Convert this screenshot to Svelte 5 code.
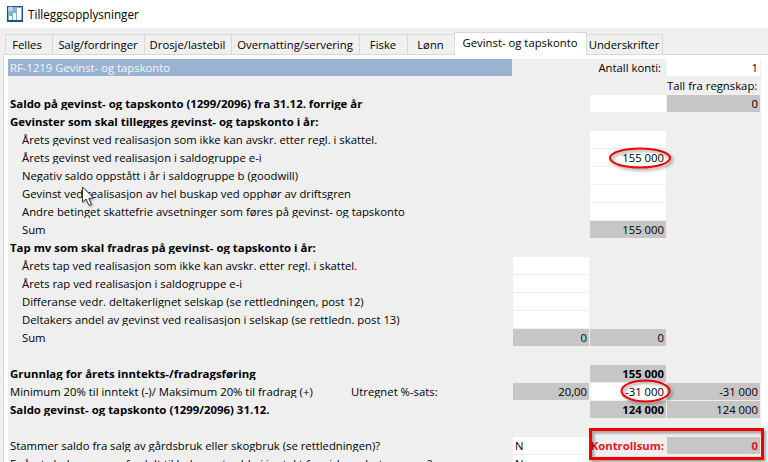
<script>
const tabs = [
  { name: 'Felles', w: 47 },
  { name: 'Salg/fordringer', w: 92 },
  { name: 'Drosje/lastebil', w: 87 },
  { name: 'Overnatting/servering', w: 128 },
  { name: 'Fiske', w: 48 },
  { name: 'Lønn', w: 47 },
  { name: 'Gevinst- og tapskonto', w: 133, active: true },
  { name: 'Underskrifter', w: 76, last: true }
];

// a, b, c = the three number columns: [kind, text]
const rows = [
  { title: 'RF-1219 Gevinst- og tapskonto', b: ['note', 'Antall konti:'], c: ['w', '1'] },
  { c: ['plain', 'Tall fra regnskap:'] },
  { label: 'Saldo på gevinst- og tapskonto (1299/2096) fra 31.12. forrige år', bold: true, b: ['w', ''], c: ['g', '0'] },
  { label: 'Gevinster som skal tillegges gevinst- og tapskonto i år:', bold: true },
  { label: 'Årets gevinst ved realisasjon som ikke kan avskr. etter regl. i skattel.', sub: true, b: ['w', ''] },
  { label: 'Årets gevinst ved realisasjon i saldogruppe e-i', sub: true, b: ['w', '155 000'] },
  { label: 'Negativ saldo oppstått i år i saldogruppe b (goodwill)', sub: true, b: ['w', ''] },
  { label: 'Gevinst ved realisasjon av hel buskap ved opphør av driftsgren', sub: true, b: ['w', ''] },
  { label: 'Andre betinget skattefrie avsetninger som føres på gevinst- og tapskonto', sub: true, b: ['w', ''] },
  { label: 'Sum', sub: true, b: ['g', '155 000'] },
  { label: 'Tap mv som skal fradras på gevinst- og tapskonto i år:', bold: true },
  { label: 'Årets tap ved realisasjon som ikke kan avskr. etter regl. i skattel.', sub: true, a: ['w', ''] },
  { label: 'Årets rap ved realisasjon i saldogruppe e-i', sub: true, a: ['w', ''] },
  { label: 'Differanse vedr. deltakerlignet selskap (se rettledningen, post 12)', sub: true, a: ['w', ''] },
  { label: 'Deltakers andel av gevinst ved realisasjon i selskap (se rettledn. post 13)', sub: true, a: ['w', ''] },
  { label: 'Sum', sub: true, a: ['g', '0'], b: ['g', '0'] },
  {},
  { label: 'Grunnlag for årets inntekts-/fradragsføring', bold: true, b: ['g strong', '155 000'] },
  { label: 'Minimum 20% til inntekt (-)/ Maksimum 20% til fradrag (+)', extra: 'Utregnet %-sats:', a: ['g', '20,00'], b: ['w', '-31 000'], c: ['g', '-31 000'] },
  { label: 'Saldo gevinst- og tapskonto (1299/2096) 31.12.', bold: true, b: ['g strong', '124 000'], c: ['g', '124 000'] },
  {},
  { label: 'Stammer saldo fra salg av gårdsbruk eller skogbruk (se rettledningen)?', a: ['w left', 'N'], b: ['alert', 'Kontrollsum:'], c: ['g alert', '0'] },
  { label: 'Er årets beløp som er fordelt til balansert saldo i inntekt fra virksomhet en gang?', a: ['w left', 'N'] }
];
</script>

{#snippet cell(col)}
  <div class="cell {col ? col[0] : ''}">{col ? col[1] : ''}</div>
{/snippet}

<div class="window">
  <header class="titlebar">
    <svg class="appicon" width="16" height="16" viewBox="0 0 16 16">
      <rect x="0" y="0" width="16" height="16" fill="#1c4f7c" />
      <rect x="1" y="1" width="14" height="13" fill="#7fb2d6" />
      <circle cx="3.5" cy="3" r="2.4" fill="#c9d6df" />
      <rect x="2" y="10" width="3" height="4" fill="#fff" />
      <rect x="6" y="7" width="3" height="7" fill="#fff" />
      <rect x="10" y="2" width="4" height="12" fill="#fff" />
    </svg>
    <span>Tilleggsopplysninger</span>
  </header>

  <nav class="tabs">
    {#each tabs as t}
      <div class="tab" class:active={t.active} class:last={t.last} style="width:{t.w}px">{t.name}</div>
    {/each}
  </nav>

  <section class="panel">
    <div class="form">
      {#each rows as r}
        <div class="row">
          {#if r.title}
            <div class="heading">{r.title}</div>
          {:else}
            <div class="label" class:bold={r.bold} class:sub={r.sub}>
              <span class="main">{r.label ?? ''}</span>
              {#if r.extra}<span>{r.extra}</span>{/if}
            </div>
          {/if}
          {@render cell(r.a)}
          {@render cell(r.b)}
          {@render cell(r.c)}
        </div>
      {/each}
    </div>
  </section>

  <!-- red markup drawn on top of the screenshot -->
  <svg class="markup" width="768" height="462" viewBox="0 0 768 462">
    <g fill="none" stroke="#f00000">
      <ellipse cx="640" cy="158" rx="30" ry="9.5" stroke-width="2" />
      <ellipse cx="645.5" cy="391" rx="24" ry="10.5" stroke-width="2" />
      <rect x="590.5" y="429.5" width="172" height="29" stroke-width="3" />
    </g>
  </svg>

  <svg class="cursor" width="18" height="24" viewBox="0 0 18 24">
    <path d="M1.5 1 L1.5 16 L5 13 L8 19.5 L10.5 18.5 L7.8 12.4 L12.5 12 Z" fill="#fff" stroke="#333" stroke-width="1" stroke-linejoin="round" />
  </svg>
</div>

<style>
:global(body) {
  margin: 0;
  background: #f0f0f0;
}

.window {
  position: relative;
  width: 768px;
  height: 462px;
  overflow: hidden;
  display: flex;
  flex-direction: column;
  background: #f0f0f0;
  color: #000;
  font-family: "Open Sans", "Noto Sans", sans-serif;
  font-size: 11.3px;
}

.titlebar {
  height: 28px;
  flex: none;
  display: flex;
  align-items: center;
  gap: 5px;
  padding-left: 7px;
  background: #fff;
  font-size: 11.7px;
}

.tabs {
  height: 26px;
  flex: none;
  display: flex;
  align-items: flex-end;
  padding-left: 5px;
}

.tab {
  box-sizing: border-box;
  height: 20px;
  padding-right: 1px;
  line-height: 19px;
  text-align: center;
  white-space: nowrap;
  background: #f0f0f0;
  border: 1px solid #d9d9d9;
  border-right: none;
  border-bottom: none;
}

.tab:first-child {
  padding-right: 4px;
}

.tab.active {
  position: relative;
  z-index: 1;
  height: 23px;
  margin-bottom: -1px;
  line-height: 20px;
  background: #fff;
  border-right: 1px solid #d9d9d9;
}

.tab.last {
  border-left: none;
  border-right: 1px solid #d9d9d9;
}

.panel {
  flex: 1;
  margin-left: 3px;
  padding: 4px 0 0 4px;
  background: #fff;
  border-top: 1px solid #d9d9d9;
  border-left: 1px solid #d9d9d9;
}

.form {
  width: 753px;
  height: 100%;
  background: #efefef;
}

.row {
  display: grid;
  grid-template-columns: 504px 76px 76px 93px;
  column-gap: 1px;
  height: 17px;
  margin-bottom: 1px;
  line-height: 17px;
}

.heading {
  padding-left: 2px;
  background: #9ab3d0;
  color: #f4f6f8;
}

.label {
  display: flex;
  height: 15px;
  overflow: hidden;
  padding-left: 2px;
  white-space: nowrap;
}

.label.bold {
  font-weight: 700;
  font-size: 11.4px;
}

.label.sub {
  padding-left: 14px;
}

.main {
  width: 341px;
  flex: none;
}

.label.bold .main,
.label.sub .main {
  width: auto;
}

.cell {
  padding-right: 2px;
  text-align: right;
  white-space: nowrap;
}

.cell.w {
  background: #fff;
}

.cell.g {
  background: #c6c6c6;
}

.cell.left {
  padding-left: 2px;
  text-align: left;
}

.cell.note {
  padding-right: 5px;
}

.cell.plain {
  padding-right: 3px;
}

.cell.strong {
  font-weight: 700;
}

.cell.alert {
  font-weight: 700;
  color: #e8141c;
}

.markup {
  position: absolute;
  top: 0;
  left: 0;
  filter: drop-shadow(2px 2px 1.5px rgba(0, 0, 0, 0.4));
}

.cursor {
  position: absolute;
  left: 81px;
  top: 186px;
  filter: drop-shadow(1px 1px 1px rgba(0, 0, 0, 0.3));
}
</style>
